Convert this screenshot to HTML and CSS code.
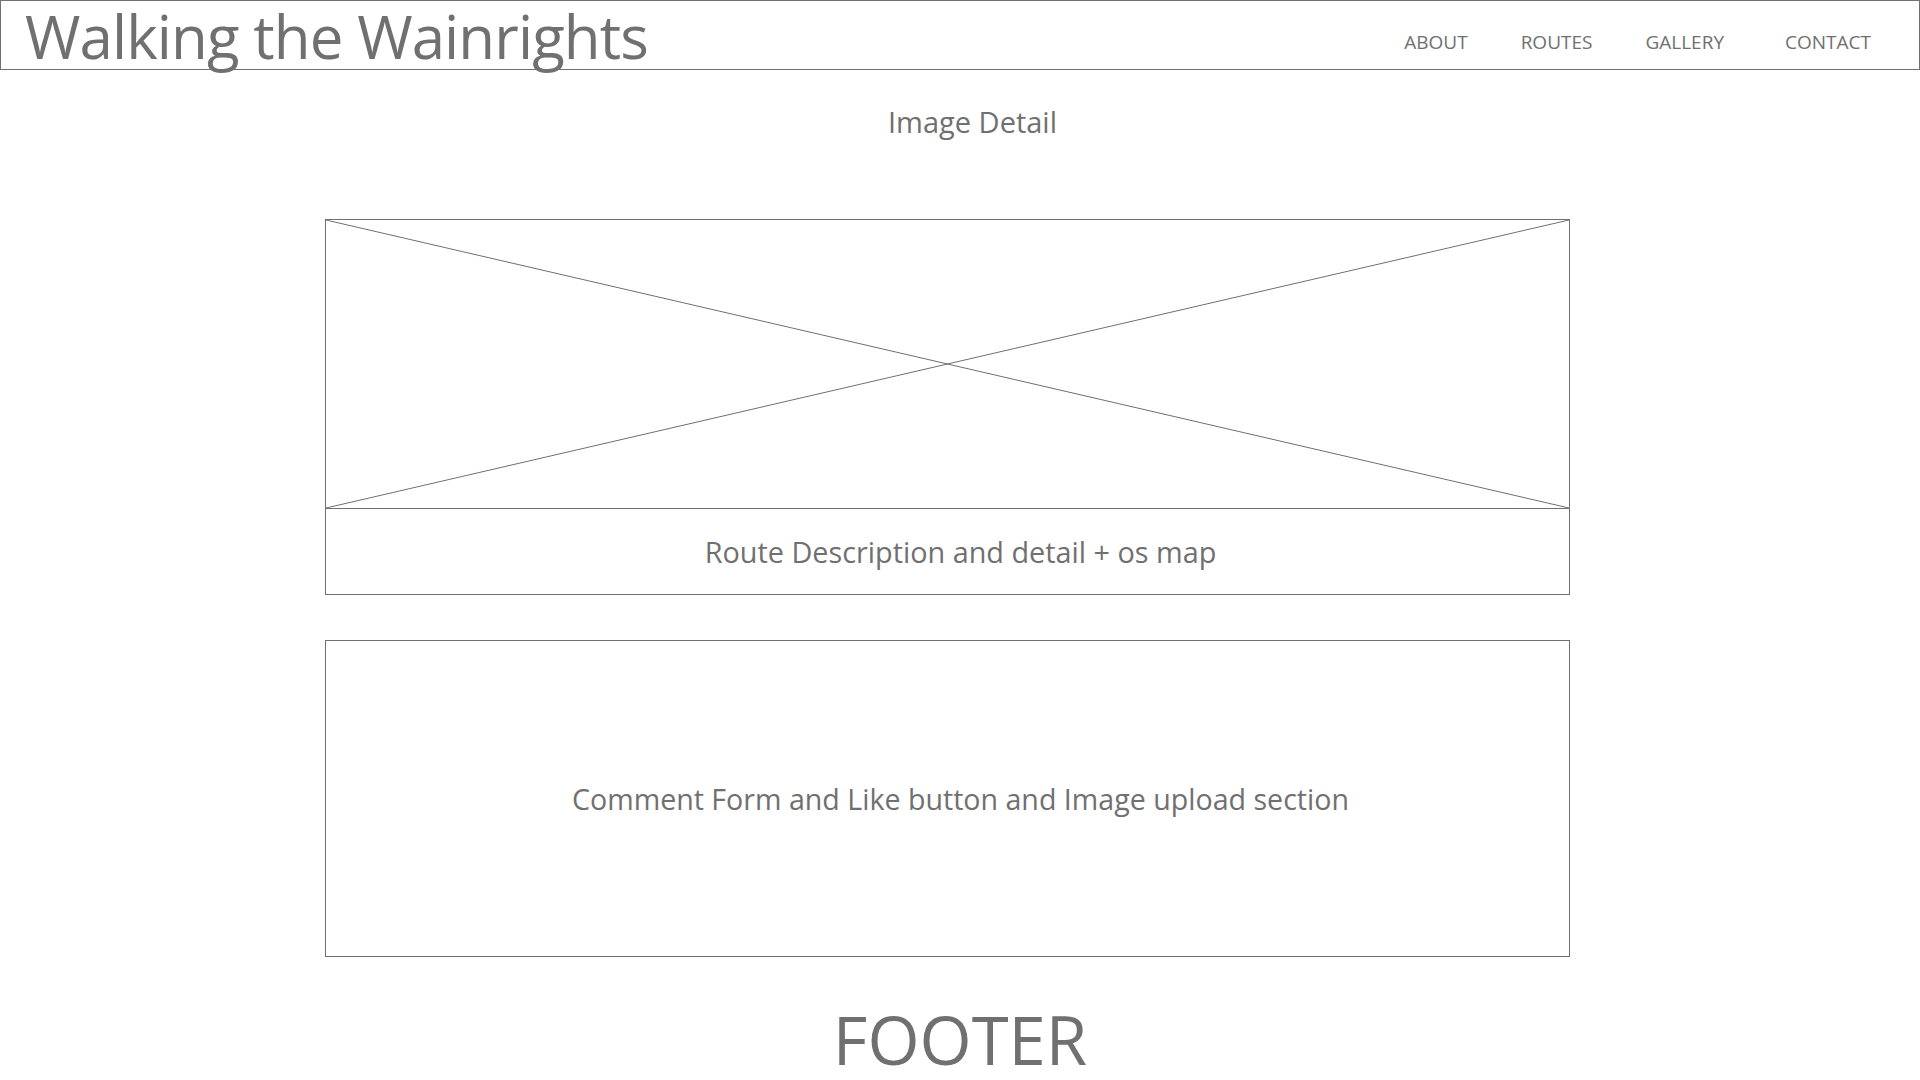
FILE: index.html
```html
<!DOCTYPE html>
<html lang="en">
<head>
<meta charset="utf-8">
<title>Walking the Wainrights</title>
<link rel="stylesheet" href="styles.css">
</head>
<body>
<header class="site-header">
  <h1 class="site-title">Walking the Wainrights</h1>
  <nav class="site-nav">
    <a href="#" class="nav-link">ABOUT</a>
    <a href="#" class="nav-link">ROUTES</a>
    <a href="#" class="nav-link">GALLERY</a>
    <a href="#" class="nav-link nav-link-last">CONTACT</a>
  </nav>
</header>
<main class="content">
  <h2 class="page-heading">Image Detail</h2>
  <section class="card route-card">
    <div class="image-placeholder">
      <svg class="placeholder-x" viewBox="0 0 100 100" preserveAspectRatio="none">
        <line x1="0" y1="0" x2="100" y2="100" vector-effect="non-scaling-stroke"/>
        <line x1="100" y1="0" x2="0" y2="100" vector-effect="non-scaling-stroke"/>
      </svg>
    </div>
    <div class="route-caption">Route Description and detail + os map</div>
  </section>
  <section class="card comment-card">
    <div class="comment-text">Comment Form and Like button and Image upload section</div>
  </section>
</main>
<footer class="site-footer">FOOTER</footer>
</body>
</html>
```
FILE: styles.css
```css
html, body {
  margin: 0;
  padding: 0;
  background: #ffffff;
}
body {
  font-family: "Open Sans", "Noto Sans", sans-serif;
  color: #707070;
}
.site-header {
  box-sizing: border-box;
  height: 70px;
  border: 1px solid #707070;
  display: flex;
  justify-content: space-between;
  align-items: flex-start;
  padding: 0 48px 0 24px;
  overflow: visible;
}
.site-title {
  margin: 0;
  font-weight: 400;
  font-size: 60px;
  line-height: 70px;
  letter-spacing: -0.9px;
  white-space: nowrap;
}
.site-nav {
  display: flex;
  gap: 53px;
  padding-top: 29px;
}
.nav-link {
  color: #707070;
  text-decoration: none;
  font-size: 19px;
  line-height: 24px;
}
.nav-link-last {
  margin-left: 8px;
}
.content {
  width: 1245px;
  margin-left: 325px;
  display: flex;
  flex-direction: column;
}
.page-heading {
  margin: 0;
  font-weight: 400;
  font-size: 29px;
  line-height: 40px;
  text-align: center;
  padding: 32px 0 0 50px;
  height: 149px;
  box-sizing: border-box;
}
.card {
  box-sizing: border-box;
  border: 1px solid #707070;
}
.route-card {
  height: 376px;
  display: flex;
  flex-direction: column;
}
.image-placeholder {
  height: 288px;
  border-bottom: 1px solid #707070;
}
.placeholder-x {
  display: block;
  width: 100%;
  height: 100%;
}
.placeholder-x line {
  stroke: #707070;
  stroke-width: 1;
}
.route-caption {
  flex: 1;
  display: flex;
  align-items: center;
  justify-content: center;
  padding-left: 26px;
  font-size: 28.8px;
}
.comment-card {
  margin-top: 45px;
  height: 317px;
  display: flex;
  align-items: center;
  justify-content: center;
  padding-left: 26px;
  font-size: 28.6px;
}
.site-footer {
  text-align: center;
  font-size: 67px;
  line-height: 80px;
  margin-top: 42px;
}
```
